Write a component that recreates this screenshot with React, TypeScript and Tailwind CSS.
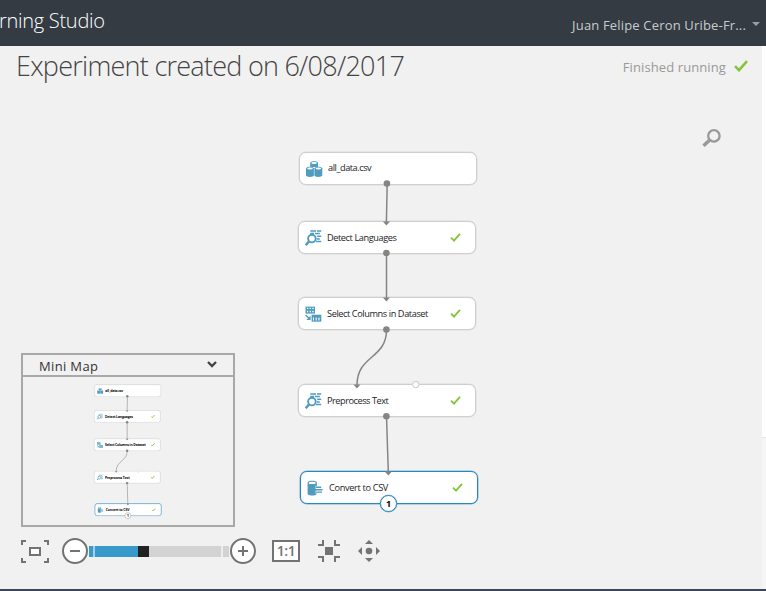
import type { ReactNode } from "react";

type IconKind = "dataset" | "text" | "columns" | "convert";

interface ModuleNode {
  label: string;
  icon: IconKind;
  place: string;
  textStyle: string;
  done?: boolean;
  selected?: boolean;
}

const modules: ModuleNode[] = [
  { label: "all_data.csv", icon: "dataset", place: "left-[299px] top-[105.5px]", textStyle: "tracking-[-0.45px]" },
  { label: "Detect Languages", icon: "text", place: "left-[298px] top-[175px]", textStyle: "tracking-[-0.41px]", done: true },
  { label: "Select Columns in Dataset", icon: "columns", place: "left-[298px] top-[251px]", textStyle: "tracking-[-0.41px]", done: true },
  { label: "Preprocess Text", icon: "text", place: "left-[298px] top-[338px]", textStyle: "tracking-[-0.47px]", done: true },
  { label: "Convert to CSV", icon: "convert", place: "left-[300px] top-[425px]", textStyle: "tracking-[-0.33px]", done: true, selected: true },
];

function Check({ className, stroke = 2.5 }: { className: string; stroke?: number }) {
  return (
    <svg viewBox="0 0 14 12" className={className} fill="none" stroke="#86c440" strokeWidth={stroke}>
      <path d="M1 6.2 5 10.2 13 1.2" />
    </svg>
  );
}

function ModuleIcon({ kind }: { kind: IconKind }) {
  const blue = "#509cc0";
  return (
    <svg viewBox="0 0 17 17" className="mt-[2px] h-[17px] w-[17px] shrink-0">
      {kind === "dataset" && (
        <g fill={blue}>
          <path d="M4.2 1.9C4.2-.2 12-.2 12 1.9V6H4.2Z" />
          <path d="M0 7.3C0 5.1 7.9 5.1 7.9 7.3V14.6C7.9 16.4 0 16.4 0 14.6Z" />
          <path d="M8.4 7.3C8.4 5.1 16.3 5.1 16.3 7.3V14.6C16.3 16.4 8.4 16.4 8.4 14.6Z" />
          <ellipse cx="8.1" cy="2" rx="2.8" ry="0.9" fill="#fff" />
          <ellipse cx="4" cy="7.4" rx="2.8" ry="1" fill="#fff" />
          <ellipse cx="12.4" cy="7.4" rx="2.8" ry="1" fill="#fff" />
        </g>
      )}
      {kind === "text" && (
        <g fill="none" stroke={blue} strokeWidth="1.5">
          <path d="M5.3 1H11M12 1H16.2M5.3 3.6H9M10 3.6H14.8M12.2 6.3H16.2M11.8 9H14.8M11 11.6H16.2" />
          <circle cx="6.9" cy="8.6" r="3.8" strokeWidth="1.9" fill="#fff" />
          <path d="M4.1 11.4.7 15.3" strokeWidth="2.4" />
        </g>
      )}
      {kind === "columns" && (
        <g fill={blue}>
          <path d="M.5.6H10V7.6H.5Z" />
          <path d="M1.9 1.8H3.2V3.1H1.9ZM4.6 1.8H5.9V3.1H4.6ZM7.3 1.8H8.6V3.1H7.3ZM1.9 4.8H3.2V6.3H1.9ZM4.6 4.8H5.9V6.3H4.6ZM7.3 4.8H8.6V6.3H7.3Z" fill="#fff" />
          <path d="M6.6 8.7H16.3V15.7H6.6Z" />
          <path d="M8 11.4H9V14.4H8ZM10.7 11.4H11.7V14.4H10.7ZM13.4 11.4H14.5V14.4H13.4Z" fill="#fff" />
          <path d="M.6 9 4.2 12.5" stroke={blue} strokeWidth="1.5" />
          <path d="M5.6 9.8V14.1H1.3Z" />
        </g>
      )}
      {kind === "convert" && (
        <g fill={blue}>
          <path d="M.6 2.8C.6.2 9.9.2 9.9 2.8V13.5C9.9 16.2.6 16.2.6 13.5Z" />
          <ellipse cx="5.2" cy="2.9" rx="3.5" ry="1.2" fill="#fff" />
          <path d="M8.6 5.8H17V13.6H8.6Z" fill="#fff" />
          <path d="M9 6.6H14.2V8H9ZM7.4 9H15.6V10.4H7.4ZM9 11.4H15V12.8H9Z" />
        </g>
      )}
    </svg>
  );
}

function Module({ node, mini }: { node: ModuleNode; mini?: boolean }) {
  return (
    <div
      className={`absolute flex h-[33px] w-[178px] items-center rounded-[7px] border bg-white pl-[5.5px] ${node.place} ${
        node.selected ? "border-[#2b88bd] ring-[0.5px] ring-[#2b88bd]/60" : "border-[#cfcfcf] ring-[0.5px] ring-[#cfcfcf]/60"
      }`}
    >
      <ModuleIcon kind={node.icon} />
      <span
        className={`ml-[5.5px] flex-1 text-[9.2px] leading-[12px] whitespace-nowrap ${mini ? "font-bold text-black" : "text-[#1c1c1c]"} ${node.textStyle}`}
      >
        {node.label}
      </span>
      {node.done && <Check className="mr-[14.5px] h-[9px] w-[11px]" stroke={mini ? 3.4 : 2.5} />}
    </div>
  );
}

function Graph({ mini }: { mini?: boolean }) {
  return (
    <>
      {modules.map((node) => (
        <Module key={node.label} node={node} mini={mini} />
      ))}
      <svg viewBox="0 0 762 543" className="absolute top-0 left-0 h-[543px] w-[762px]">
        <g fill="none" stroke="#858585" strokeWidth="1.5">
          <path d="M387.2 138 386.4 176" />
          <path d="M386.5 207V253" />
          <path d="M386.5 284C386.5 313 357 309 357 339" />
          <path d="M386.5 370 388.3 426" />
        </g>
        <g fill="#858585">
          <path d="M382.8 175.5H390L386.4 179.5Z" />
          <path d="M382.8 251.5H390L386.4 255.5Z" />
          <path d="M353.3 338.5H360.5L356.9 342.5Z" />
          <path d="M384.7 425.5H391.9L388.3 429.5Z" />
          <circle cx="386.9" cy="137.5" r="3.3" />
          <circle cx="386.4" cy="207" r="3.3" />
          <circle cx="386.4" cy="283.5" r="3.3" />
          <circle cx="386.4" cy="370.3" r="3.3" />
        </g>
        <circle cx="415.8" cy="338.5" r="3.2" fill="#fff" stroke="#c8c8c8" />
      </svg>
      <span
        className={`absolute top-[449px] left-[380px] flex h-[17px] w-[17px] items-center justify-center rounded-full border bg-white text-[9px] font-bold text-black ${
          mini ? "border-[#777]" : "border-[#2b88bd] ring-[0.5px] ring-[#2b88bd]/60"
        }`}
      >
        1
      </span>
    </>
  );
}

function RoundButton({ children }: { children: ReactNode }) {
  return (
    <svg viewBox="0 0 26 26" className="h-[26px] w-[26px] shrink-0" fill="none" stroke="#737373" strokeWidth="2">
      <circle cx="13" cy="13" r="12" fill="#fff" />
      {children}
    </svg>
  );
}

export default function App() {
  return (
    <div className="flex h-[591px] w-[766px] flex-col overflow-hidden bg-[#f1f1f1] font-['Open_Sans','Noto_Sans',sans-serif]">
      <header className="flex h-[46px] shrink-0 items-start justify-between bg-[#343b43]">
        <div className="-ml-[1px] pt-[7px] text-[20px] leading-[27px] font-light tracking-[-0.28px] whitespace-nowrap text-white">rning Studio</div>
        <div className="flex items-center pt-[15px] pr-[6px]">
          <span className="text-[13px] leading-[20px] tracking-[0.17px] whitespace-nowrap text-[#c8cbce]">Juan Felipe Ceron Uribe-Fr...</span>
          <svg viewBox="0 0 8 4" className="-mt-[2px] ml-[6px] h-[4px] w-[8px]" fill="#9b9fa4">
            <path d="M0 0H8L4 4Z" />
          </svg>
        </div>
      </header>

      <div className="flex h-[543px] shrink-0">
        <main className="relative flex w-[762px] flex-col justify-between bg-[#f1f1f1]">
          <div className="flex justify-between">
            <h1 className="pl-[16px] text-[27px] leading-[40px] font-light tracking-[-0.74px] whitespace-nowrap text-[#444]">
              Experiment created on 6/08/2017
            </h1>
            <div className="flex flex-col items-end pt-[11px] pr-[14px]">
              <div className="flex items-center">
                <span className="text-[13px] leading-[20px] tracking-[0.1px] whitespace-nowrap text-[#999]">Finished running</span>
                <Check className="-mt-[2px] ml-[8px] h-[12px] w-[14px]" stroke={2.6} />
              </div>
              <svg viewBox="0 0 19 18" className="mt-[52px] mr-[27px] h-[18px] w-[19px]" fill="none" stroke="#999">
                <circle cx="11.9" cy="6.9" r="5.7" strokeWidth="2.3" />
                <path d="M7.7 11 1.5 16.8" strokeWidth="3.4" />
              </svg>
            </div>
          </div>

          <Graph />

          <div className="pb-[25px] pl-[21px]">
            <section className="h-[174px] w-[214px] border-2 border-[#a8a8a8]">
              <div className="flex h-[22px] items-center justify-between border-b-2 border-[#a8a8a8] pr-[16px] pl-[16px]">
                <span className="pt-[2px] text-[13px] leading-[18px] tracking-[0.35px] text-[#333]">Mini Map</span>
                <svg viewBox="0 0 10 7" className="-mt-[1px] h-[7px] w-[10px]" fill="none" stroke="#444" strokeWidth="2.4">
                  <path d="M1 1 5 5 9 1" />
                </svg>
              </div>
              <div className="relative h-[148px] overflow-hidden">
                <div className="absolute top-[-32px] left-[-40px] h-[543px] w-[762px] origin-top-left scale-[0.373]">
                  <Graph mini />
                </div>
              </div>
            </section>

            <div className="mt-[11px] flex h-[26px] items-start">
              <svg viewBox="0 0 28 23" className="mt-[2px] h-[23px] w-[28px]" fill="none" stroke="#737373" strokeWidth="2">
                <path d="M1 5V1H5M23 1H27V5M27 18V22H23M5 22H1V18" />
                <path d="M9 8H19V15H9Z" fill="#fff" />
              </svg>
              <div className="ml-[13px] flex">
                <RoundButton>
                  <path d="M8 13H18" />
                </RoundButton>
                <div className="mt-[8px] ml-[1px] flex h-[11px] w-[141px]">
                  <span className="w-[4px] bg-[#3899cb]" />
                  <span className="w-[2px] bg-[#a5d0e6]" />
                  <span className="w-[43px] bg-[#3899cb]" />
                  <span className="w-[11px] bg-[#222]" />
                  <span className="w-[72px] bg-[#d3d3d3]" />
                  <span className="w-[2px] bg-[#ededed]" />
                  <span className="w-[6px] bg-[#d3d3d3]" />
                </div>
                <RoundButton>
                  <path d="M8 13H18M13 8V18" />
                </RoundButton>
              </div>
              <span className="mt-[2px] ml-[16px] flex h-[22px] w-[28px] items-center justify-center border-2 border-[#737373] bg-white text-[14px] leading-none font-semibold tracking-[-0.5px] text-[#737373]">
                1:1
              </span>
              <svg viewBox="0 0 22 22" className="mt-[2px] ml-[18px] h-[22px] w-[22px]" fill="none" stroke="#737373" strokeWidth="2">
                <path d="M0 5H5V0M17 0V5H22M22 17H17V22M5 22V17H0" />
                <path d="M7 7H15V15H7Z" fill="#737373" stroke="none" />
              </svg>
              <svg viewBox="0 0 22 22" className="mt-[2px] ml-[18px] h-[22px] w-[22px]" fill="#737373">
                <circle cx="11" cy="11" r="3.3" />
                <path d="M7 4 11 0 15 4ZM7 18H15L11 22ZM4 7V15L0 11ZM18 7 22 11 18 15Z" />
              </svg>
            </div>
          </div>
        </main>
        <aside className="flex w-[4px] flex-col bg-[#f5f5f5]">
          <div className="h-[392px] border-b border-[#e6e6e6] bg-white" />
        </aside>
      </div>
      <footer className="h-[2px] shrink-0 bg-[#3b4757]" />
    </div>
  );
}
